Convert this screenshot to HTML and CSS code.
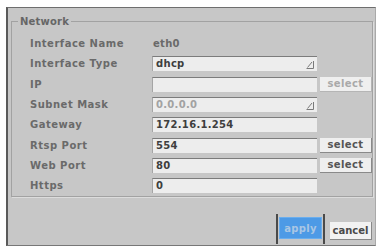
FILE: index.html
```html
<html>
<head>
    <link rel="stylesheet" href="styles.css">
</head>
<body>
    <div class="window">
        <fieldset class="group">
            <legend>Network</legend>
            <div class="rows">
                <div class="label">Interface Name</div>
                <div class="value">eth0</div>
                <div></div>

                <div class="label">Interface Type</div>
                <div class="field combo">dhcp<svg class="grip" width="8" height="9" viewBox="0 0 8 9"><path d="M1.5 7.5 L6 2 M0.5 8.5 H7.5 V1" fill="none" stroke="#7a7a7a" stroke-width="1"/></svg></div>
                <div></div>

                <div class="label">IP</div>
                <div class="field"></div>
                <button class="pick off">select</button>

                <div class="label">Subnet Mask</div>
                <div class="field combo dim">0.0.0.0<svg class="grip" width="8" height="9" viewBox="0 0 8 9"><path d="M1.5 7.5 L6 2 M0.5 8.5 H7.5 V1" fill="none" stroke="#7a7a7a" stroke-width="1"/></svg></div>
                <div></div>

                <div class="label">Gateway</div>
                <div class="field">172.16.1.254</div>
                <div></div>

                <div class="label">Rtsp Port</div>
                <div class="field">554</div>
                <button class="pick">select</button>

                <div class="label">Web Port</div>
                <div class="field">80</div>
                <button class="pick">select</button>

                <div class="label">Https</div>
                <div class="field">0</div>
                <div></div>
            </div>
        </fieldset>
        <div class="actions">
            <div class="focus"><button class="apply">apply</button></div>
            <button class="cancel">cancel</button>
        </div>
    </div>
</body>
</html>
```

FILE: styles.css
```css
body { margin: 0; background: #fff; font-family: "DejaVu Sans", sans-serif; font-size: 10px; font-weight: bold; }
.window { margin: 7px 0 0 6px; width: 367px; height: 237px; background: #c7c7c7; border-left: 2px solid #5a5a5a; border-top: 1px solid #6e6e6e; border-right: 1px solid #a9a9a9; border-bottom: 1px solid #777; display: flex; flex-direction: column; }
.group { margin: 8px 2px 0 3px; padding: 9px 0 4px 0; border: 1px solid #a2a2a2; box-shadow: 1px 1px 0 #dcdcdc; height: 181px; box-sizing: border-box; }
.group legend { margin-left: 6px; padding: 0 2px; color: #666; letter-spacing: 0.2px; }
.rows { display: grid; grid-template-columns: 119px 165px 52px; column-gap: 3px; grid-auto-rows: 15px; row-gap: 5.33px; padding-left: 18px; }
.label { color: #6a6a6a; line-height: 15px; letter-spacing: 0.5px; }
.value { color: #6a6a6a; line-height: 15px; padding-left: 1px; letter-spacing: 0.3px; }
.field { position: relative; background: #ededed; border-top: 1px solid #7c7c7c; border-left: 1px solid #a5a5a5; box-sizing: border-box; color: #3e3e3e; line-height: 14px; padding-left: 3px; letter-spacing: 0.3px; }
.field.dim { color: #a2a2a2; }
.grip { position: absolute; right: 3px; top: 3px; }
.pick { font: inherit; margin: 0; padding: 0; background: #efefef; border: none; border-right: 1px solid #8a8a8a; border-bottom: 1px solid #8a8a8a; color: #555; letter-spacing: 0.4px; height: 15px; }
.pick.off { color: #a9a9a9; border-color: #b5b5b5; }
.actions { flex: 1; display: flex; justify-content: flex-end; align-items: flex-end; gap: 5px; padding: 0 3px 1px 0; }
.focus { border-left: 2px solid #4a4a4a; border-right: 2px solid #4a4a4a; padding: 3px 1px 5px 1px; height: 22px; }
.apply { font: inherit; margin: 0; height: 22px; width: 43px; padding: 0; background: #4d9ae6; border: none; box-shadow: inset 0 0 0 1px #6aaeee; color: #a9c6e4; letter-spacing: 0.3px; }
.cancel { font: inherit; margin: 0 0 4px 0; height: 18px; width: 42px; padding: 0; background: #f2f2f2; border: none; border-right: 1px solid #888; border-bottom: 1px solid #888; color: #4a4a4a; }
```
